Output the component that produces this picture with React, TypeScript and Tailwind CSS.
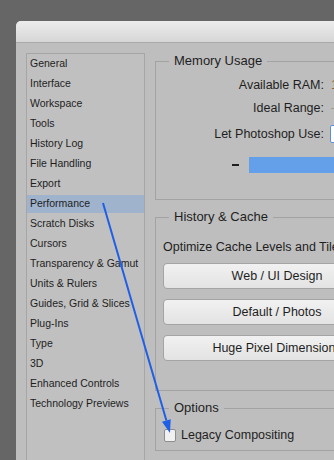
import React from "react";

const categories = [
  "General",
  "Interface",
  "Workspace",
  "Tools",
  "History Log",
  "File Handling",
  "Export",
  "Performance",
  "Scratch Disks",
  "Cursors",
  "Transparency & Gamut",
  "Units & Rulers",
  "Guides, Grid & Slices",
  "Plug-Ins",
  "Type",
  "3D",
  "Enhanced Controls",
  "Technology Previews",
];

const cachePresets = ["Web / UI Design", "Default / Photos", "Huge Pixel Dimensions"];

const App: React.FC = () => {
  return (
    <div className="relative w-[334px] h-[460px] overflow-hidden bg-[#666666] font-['Liberation_Sans',Arial,sans-serif] text-[#1e1e1e]">
      <div className="ml-[16px] mt-[21px] w-[420px] h-[460px] rounded-tl-[5px] overflow-hidden bg-[#bebebe]">
        {/* title bar */}
        <div className="h-[22px] bg-gradient-to-b from-[#ededed] to-[#d6d6d6] border-b border-[#a9a9a9]" />

        <div className="flex pl-[10px] pt-[10px]">
          {/* category list */}
          <div className="w-[119px] h-[420px] shrink-0 border border-[#a6a6a6] bg-[#c0c0c0] text-[10.5px]">
            {categories.map((name) => (
              <div key={name} className="h-[20px] py-[1px]">
                <div
                  className={
                    name === "Performance"
                      ? "h-[18px] flex items-center px-[3px] bg-[#9fb3cc]"
                      : "h-[18px] flex items-center px-[3px]"
                  }
                >
                  {name}
                </div>
              </div>
            ))}
          </div>

          {/* settings */}
          <div className="ml-[10px] w-[300px] shrink-0 flex flex-col">
            <fieldset className="border border-[#a3a3a3] pl-[7px] pb-[26px]">
              <legend className="ml-[6px] px-[5px] text-[13px] leading-[16px]">Memory Usage</legend>
              <div className="text-[12.5px]">
                <div className="mt-[4px] h-[24px] flex items-center">
                  <span className="w-[161px] text-right">Available RAM:</span>
                  <span className="ml-[7px] text-[#8a6a3e]">1</span>
                </div>
                <div className="h-[23px] flex items-center">
                  <span className="w-[161px] text-right">Ideal Range:</span>
                  <span className="ml-[7px] text-[#9a9a9a]">–</span>
                </div>
                <div className="mt-[2px] h-[24px] flex items-center">
                  <span className="w-[161px] text-right">Let Photoshop Use:</span>
                  <div className="ml-[6px] w-[60px] h-[18px] bg-white border border-[#5b8fde] rounded-[2px]" />
                </div>
                <div className="mt-[11px] h-[16px] flex items-center">
                  <div className="ml-[69px] w-[7px] h-[2px] bg-[#1e1e1e]" />
                  <div className="ml-[10px] w-[120px] h-[16px] bg-[#63a0e9]" />
                </div>
              </div>
            </fieldset>

            <fieldset className="mt-[9px] border border-[#a3a3a3] pl-[7px] pb-[29px]">
              <legend className="ml-[6px] px-[5px] text-[13px] leading-[16px]">History &amp; Cache</legend>
              <div className="mt-[14px] h-[16px] leading-[16px] text-[12.5px] whitespace-nowrap">
                Optimize Cache Levels and Tile Size:
              </div>
              {cachePresets.map((label, i) => (
                <div
                  key={label}
                  className={
                    (i === 0 ? "mt-[8px] " : "mt-[10px] ") +
                    "w-[228px] h-[26px] flex items-center justify-center rounded-[4px] border border-[#a4a4a4] bg-gradient-to-b from-[#f1f1f1] to-[#e3e3e3] text-[12.5px] whitespace-nowrap"
                  }
                >
                  {label}
                </div>
              ))}
            </fieldset>

            <fieldset className="mt-[9px] border border-[#a3a3a3] pl-[7px] pb-[8px]">
              <legend className="ml-[6px] px-[5px] text-[13px] leading-[16px]">Options</legend>
              <div className="mt-[12px] h-[14px] flex items-center text-[12.5px]">
                <div className="ml-[1px] w-[12px] h-[13px] rounded-[2px] border border-[#8d8d8d] bg-[#f1f1f1]" />
                <span className="ml-[5px]">Legacy Compositing</span>
              </div>
            </fieldset>
          </div>
        </div>
      </div>

      {/* annotation arrow */}
      <svg className="absolute inset-0 pointer-events-none" width="334" height="460" viewBox="0 0 334 460">
        <line x1="103" y1="203" x2="166.4" y2="420.5" stroke="#1f5fe6" strokeWidth="2" />
        <polygon points="170,433 162,421.8 170.7,419.3" fill="#1f5fe6" />
      </svg>
    </div>
  );
};

export default App;
